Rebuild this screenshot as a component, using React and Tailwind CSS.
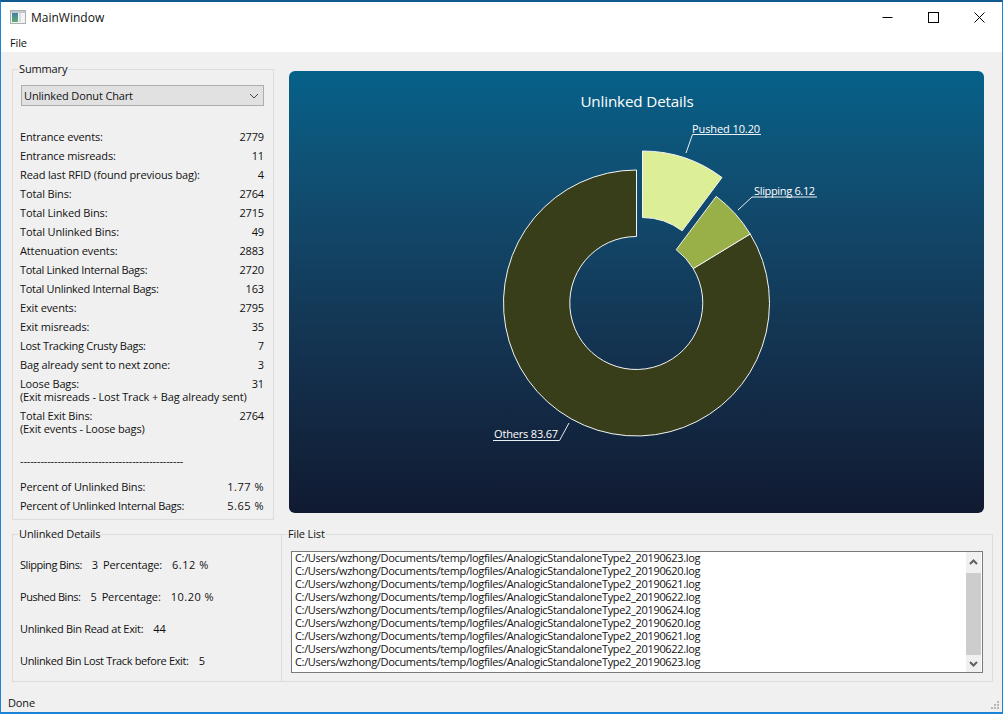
const summaryRows = [
  ["Entrance events:", "2779"],
  ["Entrance misreads:", "11"],
  ["Read last RFID (found previous bag):", "4"],
  ["Total Bins:", "2764"],
  ["Total Linked Bins:", "2715"],
  ["Total Unlinked Bins:", "49"],
  ["Attenuation events:", "2883"],
  ["Total Linked Internal Bags:", "2720", null, true],
  ["Total Unlinked Internal Bags:", "163", null, true],
  ["Exit events:", "2795"],
  ["Exit misreads:", "35"],
  ["Lost Tracking Crusty Bags:", "7", null, true],
  ["Bag already sent to next zone:", "3"],
  ["Loose Bags:", "31", "(Exit misreads - Lost Track + Bag already sent)"],
  ["Total Exit Bins:", "2764", "(Exit events - Loose bags)"],
];

const files = [
  "20190623",
  "20190620",
  "20190621",
  "20190622",
  "20190624",
  "20190620",
  "20190621",
  "20190622",
  "20190623",
];

function Row({ label, value, note, tight }) {
  return (
    <div>
      <div className="flex justify-between">
        <span className={tight ? "tracking-[-0.3px]" : ""}>{label}</span>
        <span>{value}</span>
      </div>
      {note && <div className="whitespace-nowrap">{note}</div>}
    </div>
  );
}

function Group({ title, className, children }) {
  return (
    <div className={`relative border border-[#dcdcdc] ${className}`}>
      <span className="absolute left-[5px] top-[-8px] bg-[#f0f0f0] px-px leading-[13px]">
        {title}
      </span>
      {children}
    </div>
  );
}

function DonutChart() {
  const font = { fontFamily: "'Open Sans', sans-serif" };
  return (
    <div className="mt-[2px] h-[442px] w-[695px] overflow-hidden rounded-[6px] bg-gradient-to-b from-[#056189] to-[#101a31]">
      <svg viewBox="289 71 695 442" className="block h-full w-full">
        <text x="637" y="107" textAnchor="middle" fill="#fff" fontSize="15.2" style={font}>
          Unlinked Details
        </text>
        <path
          d="M636.5 170 A133 133 0 1 0 750.2 234 L693.2 268.6 A66.5 66.5 0 1 1 636.5 236.5 Z"
          fill="#393e1a"
          stroke="#f4f4f4"
        />
        <path
          d="M716.2 196.4 A133 133 0 0 1 750.2 234 L693.2 268.6 A66.5 66.5 0 0 0 676.2 249.7 Z"
          fill="#99af47"
          stroke="#f4f4f4"
        />
        <path
          d="M642.5 151 A133 133 0 0 1 722 177.5 L682.2 230.8 A66.5 66.5 0 0 0 642.5 217.5 Z"
          fill="#dcef96"
          stroke="#f4f4f4"
        />
        <g fill="#fff" fontSize="11" style={font}>
          <text x="692" y="133" textLength="68">Pushed 10.20</text>
          <text x="754" y="195" textLength="61">Slipping 6.12</text>
          <text x="494" y="438" textLength="64">Others 83.67</text>
        </g>
        <g fill="none" stroke="#e8eef2" strokeWidth="1">
          <path d="M686 153 L692.5 134.5 H761" />
          <path d="M738 210 L752 197 H817" />
          <path d="M569 423 L559.5 440.5 H493" />
        </g>
      </svg>
    </div>
  );
}

export default function App() {
  return (
    <div
      className="flex h-[714px] w-[1003px] flex-col overflow-hidden border-x border-b-2 border-t-2 border-x-[#1883d7] border-b-[#1883d7] border-t-[#0f5a8e] bg-[#f0f0f0] text-[11px] leading-[13px] tracking-[-0.14px] text-[#111]"
      style={{ fontFamily: "'Open Sans', sans-serif" }}
    >
      <div className="bg-white">
        <div className="flex h-[30px] items-center justify-between pl-[9px]">
          <div className="flex items-center gap-[5px]">
            <svg width="16" height="14" viewBox="0 0 16 14">
              <defs>
                <linearGradient id="appIcon" x1="0" y1="0" x2="0" y2="1">
                  <stop offset="0" stopColor="#3f7fa8" />
                  <stop offset="1" stopColor="#5fb06a" />
                </linearGradient>
              </defs>
              <rect x="0.5" y="0.5" width="15" height="13" fill="#f4f4f4" stroke="#a8b0b2" />
              <rect x="1" y="1" width="14" height="2" fill="#c4cacc" />
              <rect x="2" y="3" width="6" height="9" fill="url(#appIcon)" />
              <rect x="9" y="3" width="2" height="9" fill="#d5dde0" />
            </svg>
            <span className="text-[12px] tracking-normal">MainWindow</span>
          </div>
          <div className="flex h-full">
            <div className="flex w-[46px] items-center justify-center">
              <svg width="11" height="11" viewBox="0 0 11 11">
                <path d="M0.5 5.5 H10.5" stroke="#000" />
              </svg>
            </div>
            <div className="flex w-[46px] items-center justify-center">
              <svg width="11" height="11" viewBox="0 0 11 11">
                <rect x="0.5" y="0.5" width="10" height="10" fill="none" stroke="#000" />
              </svg>
            </div>
            <div className="flex w-[46px] items-center justify-center">
              <svg width="11" height="11" viewBox="0 0 11 11">
                <path d="M0.5 0.5 L10.5 10.5 M10.5 0.5 L0.5 10.5" stroke="#000" />
              </svg>
            </div>
          </div>
        </div>
        <div className="flex h-[20px] items-center pl-[9px]">File</div>
      </div>

      <div className="flex flex-1 flex-col pl-[11px] pr-[9px] pt-[17px]">
        <div className="flex items-start gap-[15px]">
          <Group title="Summary" className="h-[451px] w-[262px] shrink-0 pl-[7px] pr-[9px] pt-[15px]">
            <div className="ml-px flex h-[21px] items-center justify-between border border-[#adadad] bg-[#e1e1e1] pl-[2px] pr-[4px]">
              <span>Unlinked Donut Chart</span>
              <svg width="10" height="6" viewBox="0 0 10 6">
                <path d="M1 1 L5 5 L9 1" fill="none" stroke="#444" />
              </svg>
            </div>
            <div className="mt-[24px] flex flex-col gap-[6px]">
              {summaryRows.map(([label, value, note, tight]) => (
                <Row key={label} label={label} value={value} note={note} tight={tight} />
              ))}
            </div>
            <div className="mt-[19px]">------------------------------------------------</div>
            <div className="mt-[13px] flex flex-col gap-[6px]">
              <Row label="Percent of Unlinked Bins:" value={<span className="tracking-[0.5px]">1.77 %</span>} />
              <Row label="Percent of Unlinked Internal Bags:" value={<span className="tracking-[0.5px]">5.65 %</span>} tight />
            </div>
          </Group>
          <DonutChart />
        </div>

        <div className="mt-[14px] flex h-[148px]">
          <Group
            title="Unlinked Details"
            className="w-[270px] shrink-0 pl-[7px] pt-[23px]"
          >
            <div className="flex flex-col gap-[19px]">
              <div className="flex gap-[10px]"><span className="tracking-[-0.45px]">Slipping Bins:</span><span>3</span><span className="-ml-[5px]">Percentage:</span><span className="tracking-[0.5px]">6.12 %</span></div>
              <div className="flex gap-[10px]"><span className="tracking-[-0.45px]">Pushed Bins:</span><span>5</span><span className="-ml-[5px]">Percentage:</span><span className="tracking-[0.5px]">10.20 %</span></div>
              <div className="flex gap-[10px]"><span className="tracking-[-0.3px]">Unlinked Bin Read at Exit:</span><span>44</span></div>
              <div className="flex gap-[10px]"><span className="tracking-[-0.35px]">Unlinked Bin Lost Track before Exit:</span><span>5</span></div>
            </div>
          </Group>
          <Group
            title="File List"
            className="ml-[-1px] flex-1 px-[9px] pt-[16px]"
          >
            <div className="flex h-[122px] border border-[#7a7a7a] bg-white">
              <div className="-mt-px flex-1 pl-[3px] tracking-[-0.33px]">
                {files.map((date, i) => (
                  <div key={i}>
                    {`C:/Users/wzhong/Documents/temp/logfiles/AnalogicStandaloneType2_${date}.log`}
                  </div>
                ))}
              </div>
              <div className="mr-px flex w-[15px] flex-col items-center bg-[#f0f0f0]">
                <svg className="mt-[7px]" width="9" height="6" viewBox="0 0 9 6">
                  <path d="M1 5 L4.5 1.5 L8 5" fill="none" stroke="#606060" strokeWidth="2" />
                </svg>
                <div className="mt-[8px] h-[82px] w-full bg-[#cdcdcd]" />
                <svg className="mt-[6px]" width="9" height="6" viewBox="0 0 9 6">
                  <path d="M1 1 L4.5 4.5 L8 1" fill="none" stroke="#606060" strokeWidth="2" />
                </svg>
              </div>
            </div>
          </Group>
        </div>
      </div>

      <div className="relative flex h-[20px] items-center pl-[7px]">
        Done
        <svg className="absolute bottom-[2px] right-[2px]" width="9" height="9" viewBox="0 0 9 9" fill="#b8b8b8">
          <rect x="6" y="0" width="2" height="2" />
          <rect x="3" y="3" width="2" height="2" />
          <rect x="6" y="3" width="2" height="2" />
          <rect x="0" y="6" width="2" height="2" />
          <rect x="3" y="6" width="2" height="2" />
          <rect x="6" y="6" width="2" height="2" />
        </svg>
      </div>
    </div>
  );
}
